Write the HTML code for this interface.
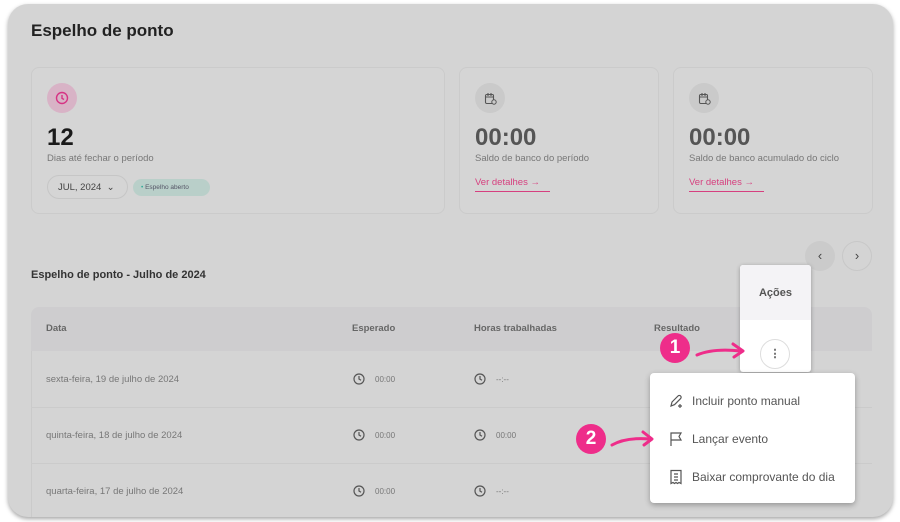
<!DOCTYPE html>
<html><head><meta charset="utf-8"><style>
*{box-sizing:border-box;margin:0;padding:0}
body{width:900px;height:522px;background:#fff;font-family:"Liberation Sans",sans-serif;position:relative;overflow:hidden;color:#222}
.panel{position:absolute;left:8px;top:4px;width:885px;height:513px;background:#d4d4d4;border-radius:20px;box-shadow:0 2px 4px rgba(0,0,0,.35);overflow:hidden}
.abs{position:absolute}
.card{position:absolute;border:1px solid #cbcbcb;border-radius:8px;background:#d5d5d5}
.ic{position:absolute;width:30px;height:30px;border-radius:50%;background:#cacaca;display:flex;align-items:center;justify-content:center}
.big{position:absolute;font-size:24px;font-weight:bold}
.sub{position:absolute;font-size:9.5px;color:#777}
.link{position:absolute;font-size:9.5px;color:#d6407f;border-bottom:1.5px solid #d6407f;padding-bottom:3px;width:75px}
.th{position:absolute;font-size:9.5px;color:#666;font-weight:bold}
.td{position:absolute;font-size:9.5px;color:#777}
.row{position:absolute;left:23px;width:841px;height:1px;background:#cbcbcb}
.time{position:absolute;font-size:8px;color:#777;display:flex;align-items:center;gap:10px}
.badge{position:absolute;width:30px;height:30px;border-radius:50%;background:#ee2d8a;color:#fff;font-weight:bold;font-size:19px;display:flex;align-items:center;justify-content:center}
.mi{position:absolute;left:18px;font-size:12px;color:#555;display:flex;align-items:center;gap:8px}
</style></head><body>
<div class="panel">
<div class="abs" style="left:23px;top:17px;font-size:17px;font-weight:bold;color:#222">Espelho de ponto</div>

<div class="card" style="left:23px;top:63px;width:414px;height:147px">
 <div class="ic" style="left:15px;top:15px;background:#d8b3c6"><svg width="14" height="14" viewBox="0 0 14 14"><circle cx="7" cy="7" r="5.5" fill="none" stroke="#d63384" stroke-width="1.4"/><path d="M7 4v3.3l2 1.2" fill="none" stroke="#d63384" stroke-width="1.4"/></svg></div>
 <div class="big" style="left:15px;top:56px;color:#1a1a1a">12</div>
 <div class="sub" style="left:15px;top:85px">Dias até fechar o período</div>
 <div class="abs" style="left:15px;top:107px;width:81px;height:24px;border:1px solid #c6c6c6;border-radius:12px;font-size:9.5px;color:#444;padding:6px 0 0 10px">JUL, 2024 &nbsp;⌄</div>
 <div class="abs" style="left:101px;top:111px;width:77px;height:17px;border-radius:9px;background:#b9cfc9;font-size:6.5px;line-height:17px;color:#556;padding-left:8px"><span style="color:#3a9;">•</span> Espelho aberto</div>
</div>

<div class="card" style="left:451px;top:63px;width:200px;height:147px">
 <div class="ic" style="left:15px;top:15px"><svg width="13" height="13" viewBox="0 0 13 13"><rect x="1.5" y="2.5" width="8" height="9" rx="1.2" fill="none" stroke="#555" stroke-width="1.1"/><path d="M1.5 5h8M4 1v3M7 1v3" stroke="#555" stroke-width="1.1"/><circle cx="10" cy="10" r="2.2" fill="#cacaca" stroke="#555" stroke-width="1"/></svg></div>
 <div class="big" style="left:15px;top:56px;color:#555">00:00</div>
 <div class="sub" style="left:15px;top:85px">Saldo de banco do período</div>
 <div class="link" style="left:15px;top:109px">Ver detalhes →</div>
</div>
<div class="card" style="left:665px;top:63px;width:200px;height:147px">
 <div class="ic" style="left:15px;top:15px"><svg width="13" height="13" viewBox="0 0 13 13"><rect x="1.5" y="2.5" width="8" height="9" rx="1.2" fill="none" stroke="#555" stroke-width="1.1"/><path d="M1.5 5h8M4 1v3M7 1v3" stroke="#555" stroke-width="1.1"/><circle cx="10" cy="10" r="2.2" fill="#cacaca" stroke="#555" stroke-width="1"/></svg></div>
 <div class="big" style="left:15px;top:56px;color:#555">00:00</div>
 <div class="sub" style="left:15px;top:85px">Saldo de banco acumulado do ciclo</div>
 <div class="link" style="left:15px;top:109px">Ver detalhes →</div>
</div>

<div class="abs" style="left:797px;top:237px;width:30px;height:30px;border-radius:50%;background:#cbcbcb;text-align:center;line-height:29px;color:#444;font-size:13px">‹</div>
<div class="abs" style="left:834px;top:237px;width:30px;height:30px;border-radius:50%;border:1px solid #c8c8c8;text-align:center;line-height:28px;color:#444;font-size:13px">›</div>

<div class="abs" style="left:23px;top:265px;font-size:11px;font-weight:bold;color:#333">Espelho de ponto - Julho de 2024</div>

<div class="abs" style="left:23px;top:303px;width:841px;height:44px;background:#cecdcf;border-radius:8px 8px 0 0"></div>
<div class="th" style="left:38px;top:319px">Data</div>
<div class="th" style="left:344px;top:319px">Esperado</div>
<div class="th" style="left:466px;top:319px">Horas trabalhadas</div>
<div class="th" style="left:646px;top:319px">Resultado</div>
<div class="abs" style="left:23px;top:347px;width:1px;height:170px;background:#cacaca"></div>
<div class="row" style="top:403px"></div>
<div class="row" style="top:459px"></div>

<div class="td" style="left:38px;top:370px">sexta-feira, 19 de julho de 2024</div>
<div class="td" style="left:38px;top:426px">quinta-feira, 18 de julho de 2024</div>
<div class="td" style="left:38px;top:482px">quarta-feira, 17 de julho de 2024</div>

<div class="time" style="left:345px;top:369px"><svg width="12" height="12" viewBox="0 0 12 12"><circle cx="6" cy="6" r="5" fill="none" stroke="#555" stroke-width="1.2"/><path d="M6 3v3l2 1.3" fill="none" stroke="#555" stroke-width="1.2"/></svg>00:00</div>
<div class="time" style="left:345px;top:425px"><svg width="12" height="12" viewBox="0 0 12 12"><circle cx="6" cy="6" r="5" fill="none" stroke="#555" stroke-width="1.2"/><path d="M6 3v3l2 1.3" fill="none" stroke="#555" stroke-width="1.2"/></svg>00:00</div>
<div class="time" style="left:345px;top:481px"><svg width="12" height="12" viewBox="0 0 12 12"><circle cx="6" cy="6" r="5" fill="none" stroke="#555" stroke-width="1.2"/><path d="M6 3v3l2 1.3" fill="none" stroke="#555" stroke-width="1.2"/></svg>00:00</div>
<div class="time" style="left:466px;top:369px"><svg width="12" height="12" viewBox="0 0 12 12"><circle cx="6" cy="6" r="5" fill="none" stroke="#555" stroke-width="1.2"/><path d="M6 3v3l2 1.3" fill="none" stroke="#555" stroke-width="1.2"/></svg>--:--</div>
<div class="time" style="left:466px;top:425px"><svg width="12" height="12" viewBox="0 0 12 12"><circle cx="6" cy="6" r="5" fill="none" stroke="#555" stroke-width="1.2"/><path d="M6 3v3l2 1.3" fill="none" stroke="#555" stroke-width="1.2"/></svg>00:00</div>
<div class="time" style="left:466px;top:481px"><svg width="12" height="12" viewBox="0 0 12 12"><circle cx="6" cy="6" r="5" fill="none" stroke="#555" stroke-width="1.2"/><path d="M6 3v3l2 1.3" fill="none" stroke="#555" stroke-width="1.2"/></svg>--:--</div>

<div class="abs" style="left:732px;top:261px;width:71px;height:107px;background:#fff;border-radius:3px;box-shadow:0 1px 4px rgba(0,0,0,.3);overflow:hidden">
 <div style="height:55px;background:#f4f3f6;font-size:11px;font-weight:bold;color:#555;text-align:center;line-height:57px">Ações</div>
 <div style="position:absolute;left:20px;top:74px;width:30px;height:30px;border:1px solid #ddd;border-radius:50%;text-align:center;line-height:28px;font-size:11px;color:#555;font-weight:bold">⋮</div>
</div>

<div class="abs" style="left:642px;top:369px;width:205px;height:130px;background:#fff;border-radius:4px;box-shadow:0 2px 6px rgba(0,0,0,.3)">
 <div class="mi" style="top:20px"><svg width="16" height="16" viewBox="0 0 16 16"><path d="M3 13l1-4 6-6a1.8 1.8 0 012.6 2.6l-6 6z" fill="none" stroke="#555" stroke-width="1.2"/><path d="M12 11v4M10 13h4" stroke="#555" stroke-width="1.2"/></svg>Incluir ponto manual</div>
 <div class="mi" style="top:58px"><svg width="16" height="16" viewBox="0 0 16 16"><path d="M3 15V2h10l-2 3.5 2 3.5H3" fill="none" stroke="#555" stroke-width="1.2"/></svg>Lançar evento</div>
 <div class="mi" style="top:96px"><svg width="16" height="16" viewBox="0 0 16 16"><path d="M3 1.5h10v13l-2-1-1.5 1-1.5-1-1.5 1-1.5-1-2 1z" fill="none" stroke="#555" stroke-width="1.2"/><path d="M6 5h4M6 8h4M6 11h4" stroke="#555" stroke-width="1.2"/></svg>Baixar comprovante do dia</div>
</div>

<div class="badge" style="left:652px;top:329px">1</div>
<div class="badge" style="left:568px;top:420px">2</div>
<svg class="abs" style="left:685px;top:333px" width="60" height="22" viewBox="0 0 60 22"><path d="M4 18 Q20 11 48 14" fill="none" stroke="#ee2d8a" stroke-width="3" stroke-linecap="round"/><path d="M40 7l10 7-9 6" fill="none" stroke="#ee2d8a" stroke-width="3" stroke-linecap="round" stroke-linejoin="round"/></svg>
<svg class="abs" style="left:600px;top:424px" width="52" height="22" viewBox="0 0 52 22"><path d="M4 17 Q18 9 42 11" fill="none" stroke="#ee2d8a" stroke-width="3" stroke-linecap="round"/><path d="M35 4l9 7-8 6" fill="none" stroke="#ee2d8a" stroke-width="3" stroke-linecap="round" stroke-linejoin="round"/></svg>
</div>
</body></html>
